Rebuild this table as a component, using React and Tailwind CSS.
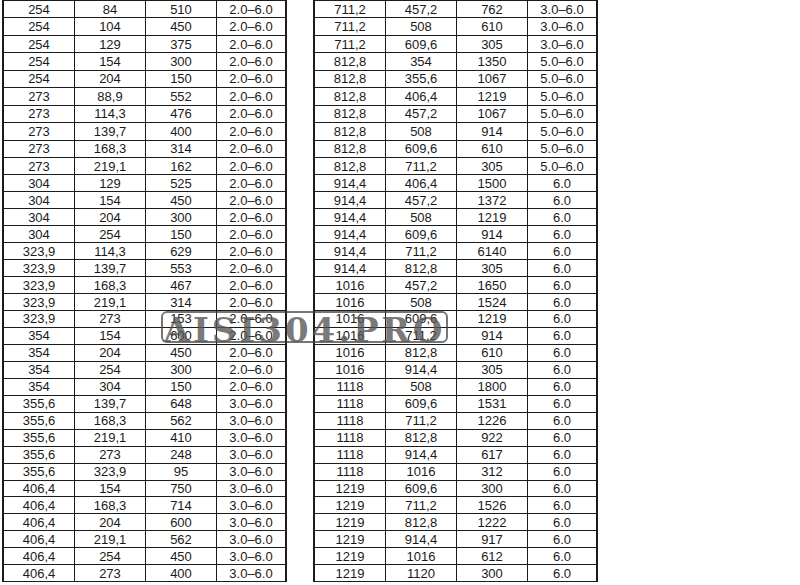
import React from "react";

const leftRows = [
  ["254", "84", "510", "2.0–6.0"],
  ["254", "104", "450", "2.0–6.0"],
  ["254", "129", "375", "2.0–6.0"],
  ["254", "154", "300", "2.0–6.0"],
  ["254", "204", "150", "2.0–6.0"],
  ["273", "88,9", "552", "2.0–6.0"],
  ["273", "114,3", "476", "2.0–6.0"],
  ["273", "139,7", "400", "2.0–6.0"],
  ["273", "168,3", "314", "2.0–6.0"],
  ["273", "219,1", "162", "2.0–6.0"],
  ["304", "129", "525", "2.0–6.0"],
  ["304", "154", "450", "2.0–6.0"],
  ["304", "204", "300", "2.0–6.0"],
  ["304", "254", "150", "2.0–6.0"],
  ["323,9", "114,3", "629", "2.0–6.0"],
  ["323,9", "139,7", "553", "2.0–6.0"],
  ["323,9", "168,3", "467", "2.0–6.0"],
  ["323,9", "219,1", "314", "2.0–6.0"],
  ["323,9", "273", "153", "2.0–6.0"],
  ["354", "154", "600", "2.0–6.0"],
  ["354", "204", "450", "2.0–6.0"],
  ["354", "254", "300", "2.0–6.0"],
  ["354", "304", "150", "2.0–6.0"],
  ["355,6", "139,7", "648", "3.0–6.0"],
  ["355,6", "168,3", "562", "3.0–6.0"],
  ["355,6", "219,1", "410", "3.0–6.0"],
  ["355,6", "273", "248", "3.0–6.0"],
  ["355,6", "323,9", "95", "3.0–6.0"],
  ["406,4", "154", "750", "3.0–6.0"],
  ["406,4", "168,3", "714", "3.0–6.0"],
  ["406,4", "204", "600", "3.0–6.0"],
  ["406,4", "219,1", "562", "3.0–6.0"],
  ["406,4", "254", "450", "3.0–6.0"],
  ["406,4", "273", "400", "3.0–6.0"],
];

const rightRows = [
  ["711,2", "457,2", "762", "3.0–6.0"],
  ["711,2", "508", "610", "3.0–6.0"],
  ["711,2", "609,6", "305", "3.0–6.0"],
  ["812,8", "354", "1350", "5.0–6.0"],
  ["812,8", "355,6", "1067", "5.0–6.0"],
  ["812,8", "406,4", "1219", "5.0–6.0"],
  ["812,8", "457,2", "1067", "5.0–6.0"],
  ["812,8", "508", "914", "5.0–6.0"],
  ["812,8", "609,6", "610", "5.0–6.0"],
  ["812,8", "711,2", "305", "5.0–6.0"],
  ["914,4", "406,4", "1500", "6.0"],
  ["914,4", "457,2", "1372", "6.0"],
  ["914,4", "508", "1219", "6.0"],
  ["914,4", "609,6", "914", "6.0"],
  ["914,4", "711,2", "6140", "6.0"],
  ["914,4", "812,8", "305", "6.0"],
  ["1016", "457,2", "1650", "6.0"],
  ["1016", "508", "1524", "6.0"],
  ["1016", "609,6", "1219", "6.0"],
  ["1016", "711,2", "914", "6.0"],
  ["1016", "812,8", "610", "6.0"],
  ["1016", "914,4", "305", "6.0"],
  ["1118", "508", "1800", "6.0"],
  ["1118", "609,6", "1531", "6.0"],
  ["1118", "711,2", "1226", "6.0"],
  ["1118", "812,8", "922", "6.0"],
  ["1118", "914,4", "617", "6.0"],
  ["1118", "1016", "312", "6.0"],
  ["1219", "609,6", "300", "6.0"],
  ["1219", "711,2", "1526", "6.0"],
  ["1219", "812,8", "1222", "6.0"],
  ["1219", "914,4", "917", "6.0"],
  ["1219", "1016", "612", "6.0"],
  ["1219", "1120", "300", "6.0"],
];

// One half of the scanned spec sheet; rows 1-10 are a touch taller in the scan.
function SizeTable({ rows }) {
  return (
    <div className="flex flex-col border-l-2 border-t border-[#1c1c1c]">
      {rows.map((row, i) => (
        <div
          key={i}
          className={`grid grid-cols-[71px_71px_71px_70px] ${i < 10 ? "h-[17.45px]" : "h-[16.96px]"}`}
        >
          {row.map((cell, j) => (
            <div
              key={j}
              className={`flex items-center justify-center border-b border-[#1c1c1c] leading-none ${
                j === 3 ? "border-r-2" : "border-r"
              }`}
            >
              {cell}
            </div>
          ))}
        </div>
      ))}
    </div>
  );
}

export default function App() {
  return (
    <div
      className="relative h-[585px] w-[800px] overflow-hidden bg-white text-[13px] text-[#1a1a1a]"
      style={{ fontFamily: '"Liberation Sans", Arial, sans-serif' }}
    >
      <div className="flex gap-[26px] pl-[2px]">
        <SizeTable rows={leftRows} />
        <SizeTable rows={rightRows} />
      </div>

      {/* watermark laid over the tables */}
      <div className="absolute left-[161px] top-[311px] flex h-[32px] w-[287px] items-center justify-center rounded-[6px] border-2 border-[rgba(60,60,60,0.7)]">
        <span
          className="pt-[5px] text-[34px] font-bold leading-none tracking-[3px] text-[rgba(85,85,85,0.8)]"
          style={{ fontFamily: '"DejaVu Serif", "Liberation Serif", serif' }}
        >
          AISI304.PRO
        </span>
      </div>
    </div>
  );
}
